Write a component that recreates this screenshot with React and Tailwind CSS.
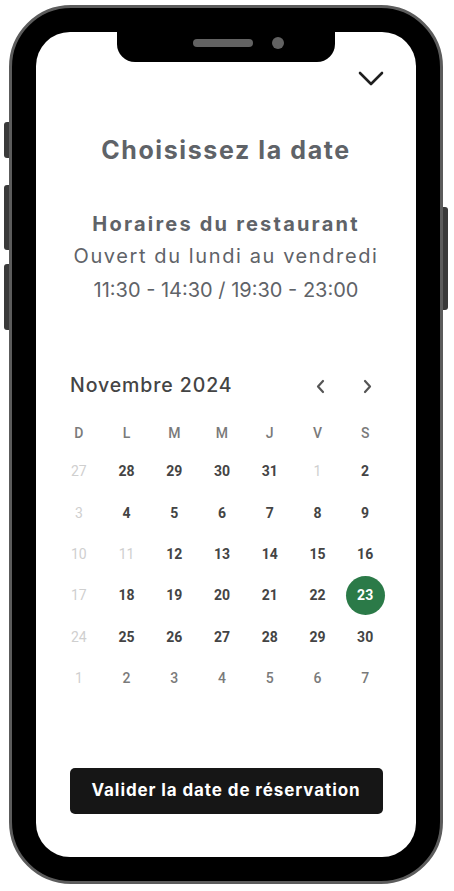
import React from "react";

const rows = [
  [["27", "off"], ["28", "on"], ["29", "on"], ["30", "on"], ["31", "on"], ["1", "off"], ["2", "on"]],
  [["3", "off"], ["4", "on"], ["5", "on"], ["6", "on"], ["7", "on"], ["8", "on"], ["9", "on"]],
  [["10", "off"], ["11", "off"], ["12", "on"], ["13", "on"], ["14", "on"], ["15", "on"], ["16", "on"]],
  [["17", "off"], ["18", "on"], ["19", "on"], ["20", "on"], ["21", "on"], ["22", "on"], ["23", "sel"]],
  [["24", "off"], ["25", "on"], ["26", "on"], ["27", "on"], ["28", "on"], ["29", "on"], ["30", "on"]],
  [["1", "off"], ["2", "next"], ["3", "next"], ["4", "next"], ["5", "next"], ["6", "next"], ["7", "next"]],
];

const heads = ["D", "L", "M", "M", "J", "V", "S"];

function Day({ v, t }) {
  if (t === "sel") {
    return (
      <div className="flex items-center justify-center">
        <div className="w-[39px] h-[39px] rounded-full bg-[#2b7a48] flex items-center justify-center text-white text-[14px] font-bold">
          {v}
        </div>
      </div>
    );
  }
  const cls =
    t === "off"
      ? "text-[#cfcfcf] font-normal"
      : t === "next"
      ? "text-[#7a7a7a] font-medium"
      : "text-[#444444] font-bold";
  return <div className={"flex items-center justify-center text-[14px] " + cls}>{v}</div>;
}

export default function App() {
  return (
    <div className="w-[454px] h-[891px] bg-white relative overflow-hidden">
      {/* side buttons */}
      <div className="absolute left-[4px] top-[122px] w-[6px] h-[36px] rounded-l-[3px] bg-[#3a3a3a]" />
      <div className="absolute left-[4px] top-[185px] w-[6px] h-[65px] rounded-l-[3px] bg-[#3a3a3a]" />
      <div className="absolute left-[4px] top-[264px] w-[6px] h-[66px] rounded-l-[3px] bg-[#3a3a3a]" />
      <div className="absolute left-[442px] top-[207px] w-[6px] h-[103px] rounded-r-[3px] bg-[#3a3a3a]" />

      <div className="absolute left-[9px] top-[5px] w-[434px] h-[879px] rounded-[62px] border-[3px] border-[#5c5c5c] bg-black p-[24px]">
        <div className="relative w-full h-full bg-white rounded-[34px] overflow-hidden flex flex-col items-center font-['Inter',sans-serif]">
          {/* notch */}
          <div className="absolute left-[81px] top-0 w-[218px] h-[30px] bg-black rounded-b-[18px]">
            <div className="absolute left-[76px] top-[7px] w-[60px] h-[8px] rounded-full bg-[#626262]" />
            <div className="absolute left-[155px] top-[5px] w-[12px] h-[12px] rounded-full bg-[#626262]" />
          </div>

          <div className="w-full flex justify-end pr-[32px] pt-[39px]">
            <svg width="26" height="16" viewBox="0 0 26 16" fill="none">
              <path d="M2 2 L13 13 L24 2" stroke="#1f1f1f" strokeWidth="2.6" strokeLinecap="round" strokeLinejoin="round" />
            </svg>
          </div>

          <h1 className="mt-[48px] text-[25px] leading-[30px] font-bold text-[#5f6368] tracking-[1.6px]">
            Choisissez la date
          </h1>

          <div className="mt-[44px] flex flex-col items-center text-[#5f6368] text-[20px]">
            <div className="font-bold tracking-[2.2px] leading-[30px]">Horaires du restaurant</div>
            <div className="tracking-[1.6px] leading-[34px]">Ouvert du lundi au vendredi</div>
            <div className="leading-[34px]">11:30 - 14:30 / 19:30 - 23:00</div>
          </div>

          <div className="mt-[65px] w-[334px] ml-[-8px] font-['Inter',sans-serif]">
            <div className="flex items-center justify-between pl-[15px] pr-[16px] h-[28px]">
              <div className="text-[19.5px] font-medium text-[#444444] tracking-[0.9px]">Novembre 2024</div>
              <div className="flex items-center gap-[38px]">
                <svg width="10" height="15" viewBox="0 0 10 15" fill="none">
                  <path d="M8 2 L3 7.5 L8 13" stroke="#555" strokeWidth="2.2" strokeLinecap="round" strokeLinejoin="round" />
                </svg>
                <svg width="10" height="15" viewBox="0 0 10 15" fill="none">
                  <path d="M2 2 L7 7.5 L2 13" stroke="#555" strokeWidth="2.2" strokeLinecap="round" strokeLinejoin="round" />
                </svg>
              </div>
            </div>
            <div className="grid grid-cols-7 mt-[23px] h-[20px] items-center font-['Roboto',sans-serif]">
              {heads.map((h, i) => (
                <div key={i} className="text-center text-[14px] font-medium text-[#7a7a7a]">
                  {h}
                </div>
              ))}
            </div>
            <div className="grid grid-cols-7 auto-rows-[41.4px] mt-[8px] font-['Roboto',sans-serif]">
              {rows.flat().map(([v, t], i) => (
                <Day key={i} v={v} t={t} />
              ))}
            </div>
          </div>

          <div className="flex-1" />
          <button className="mb-[43px] w-[313px] h-[46px] rounded-[5px] bg-[#161616] text-white text-[17px] font-bold tracking-[0.9px]">
            Valider la date de réservation
          </button>
        </div>
      </div>
    </div>
  );
}
